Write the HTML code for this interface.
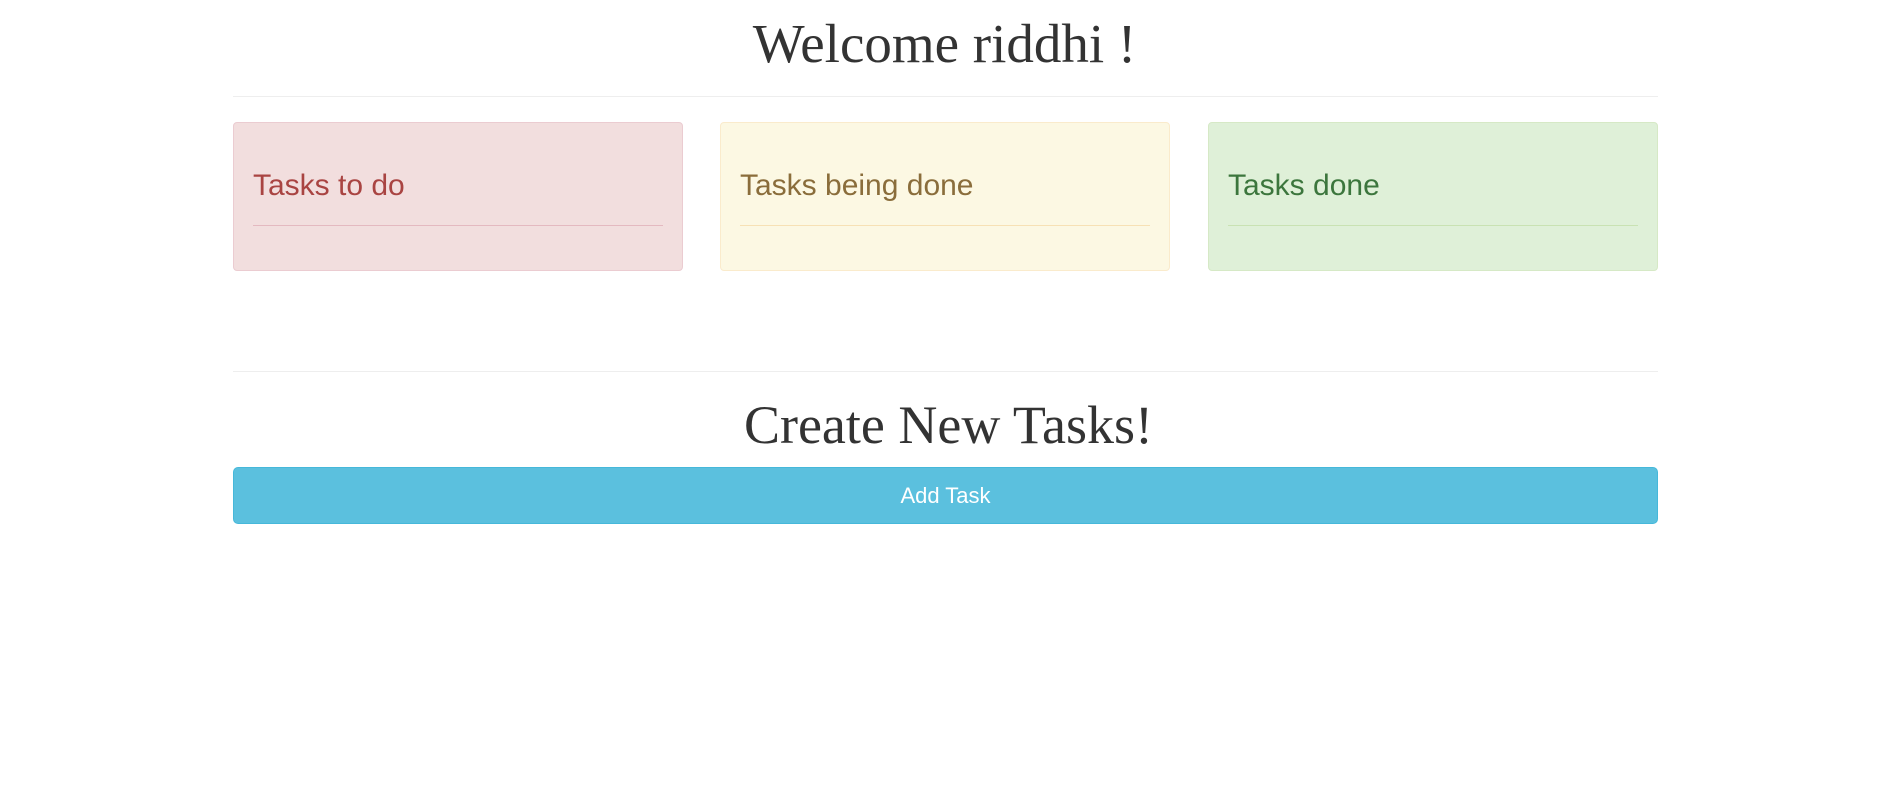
<!DOCTYPE html>
<html><head><style>
body{margin:0;background:#fff;font-family:"Liberation Sans",sans-serif;}
.c{position:absolute;left:233px;width:1425px;}
h1{position:absolute;margin:0;width:100%;text-align:center;font-family:"Liberation Serif",serif;font-weight:normal;color:#333;}
.hr{position:absolute;height:1px;background:#eee;}
.p{position:absolute;top:122px;width:448px;height:147px;border:1px solid;border-radius:4px;}
.p span{position:absolute;left:19px;top:46px;font-size:30px;}
.p i{position:absolute;left:19px;right:19px;top:102px;height:1px;}
.btn{position:absolute;top:467px;height:55px;border:1px solid #46b8da;background:#5bc0de;border-radius:5px;color:#fff;font-size:22px;text-align:center;line-height:55px;}
</style></head><body>
<div class="c" style="top:0;height:809px;left:0;width:1897px">
<h1 style="top:12px;left:-4px;font-size:55px;line-height:64px">Welcome riddhi !</h1>
<h1 style="top:394px;font-size:54px;line-height:62px">Create New Tasks!</h1>
</div>
<div class="hr" style="left:233px;width:1425px;top:96px"></div>
<div class="p" style="left:233px;background:#f2dede;border-color:#ebccd1;color:#a94442"><span>Tasks to do</span><i style="background:#e4b9c0"></i></div>
<div class="p" style="left:720px;background:#fcf8e3;border-color:#faebcc;color:#8a6d3b"><span>Tasks being done</span><i style="background:#f7e1b5"></i></div>
<div class="p" style="left:1208px;background:#dff0d8;border-color:#d6e9c6;color:#3c763d"><span>Tasks done</span><i style="background:#c9e2b3"></i></div>
<div class="hr" style="left:233px;width:1425px;top:371px"></div>
<div class="btn" style="left:233px;width:1423px">Add Task</div>
</body></html>
